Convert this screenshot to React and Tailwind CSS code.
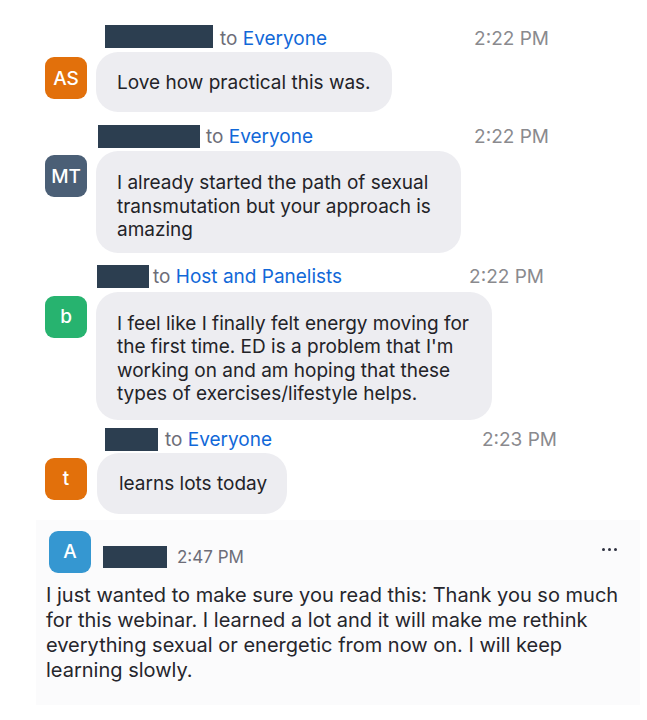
import React from "react";

const font = "font-['Inter','Liberation_Sans',sans-serif]";

function Header({ ml, w, barW, gap, to, time, shift = "mt-0" }) {
  return (
    <div className={`flex items-start h-[23px] ${ml} ${w}`}>
      <div className={`${barW} h-[23px] bg-[#2c3e50] shrink-0`} />
      <span className={`${gap} ${shift} text-[19px] leading-[23px] text-[#6d6d78] whitespace-nowrap`}>
        to <span className="text-[#1168d8]">{to}</span>
      </span>
      <span className={`ml-auto ${shift} text-[19px] leading-[23px] text-[#8a8a8e] whitespace-nowrap`}>{time}</span>
    </div>
  );
}

function Avatar({ bg, children, mt }) {
  return (
    <div
      className={`${mt} ml-[45px] w-[42px] h-[42px] rounded-[9px] ${bg} shrink-0 flex items-center justify-center text-white text-[19px] font-medium leading-none`}
    >
      {children}
    </div>
  );
}

export default function App() {
  return (
    <div className={`w-[647px] h-[720px] bg-white overflow-hidden ${font} text-[#232328] pt-[25px]`}>
      {/* Message 1 */}
      <Header ml="ml-[105px]" w="w-[444px]" barW="w-[108px]" gap="ml-[7px]" to="Everyone" time="2:22 PM" shift="mt-[2px]" />
      <div className="flex mt-[4px]">
        <Avatar bg="bg-[#e2700b]" mt="mt-[5px]">AS</Avatar>
        <div className="ml-[9px] bg-[#ededf1] rounded-[22px] pl-[21px] pr-[21px] pt-[19px] pb-[17px] text-[19px] leading-[24px] whitespace-nowrap">
          Love how practical this was.
        </div>
      </div>

      {/* Message 2 */}
      <div className="mt-[13px]">
        <Header ml="ml-[98px]" w="w-[451px]" barW="w-[102px]" gap="ml-[6px]" to="Everyone" time="2:22 PM" />
      </div>
      <div className="flex mt-[3px]">
        <Avatar bg="bg-[#4b5f76]" mt="mt-[4px]">MT</Avatar>
        <div className="ml-[9px] w-[365px] bg-[#ededf1] rounded-[22px] pl-[21px] pr-[10px] pt-[20px] pb-[11px] text-[19px] leading-[23.5px] whitespace-nowrap">
          I already started the path of sexual
          <br />
          transmutation but your approach is
          <br />
          amazing
        </div>
      </div>

      {/* Message 3 */}
      <div className="mt-[12px]">
        <Header ml="ml-[97px]" w="w-[447px]" barW="w-[52px]" gap="ml-[4px]" to="Host and Panelists" time="2:22 PM" />
      </div>
      <div className="flex mt-[4px]">
        <Avatar bg="bg-[#27b36f]" mt="mt-[4px]">b</Avatar>
        <div className="ml-[9px] w-[396px] bg-[#ededf1] rounded-[22px] pl-[21px] pr-[10px] pt-[20px] pb-[14px] text-[19px] leading-[23.5px] whitespace-nowrap">
          I feel like I finally felt energy moving for
          <br />
          the first time. ED is a problem that I'm
          <br />
          working on and am hoping that these
          <br />
          types of exercises/lifestyle helps.
        </div>
      </div>

      {/* Message 4 */}
      <div className="mt-[8px]">
        <Header ml="ml-[105px]" w="w-[452px]" barW="w-[53px]" gap="ml-[7px]" to="Everyone" time="2:23 PM" />
      </div>
      <div className="flex mt-[2px]">
        <Avatar bg="bg-[#e2700b]" mt="mt-[5px]">t</Avatar>
        <div className="ml-[10px] bg-[#ededf1] rounded-[22px] pl-[22px] pr-[20px] pt-[19px] pb-[18px] text-[19px] leading-[24px] whitespace-nowrap">
          learns lots today
        </div>
      </div>

      {/* Final panel */}
      <div className="mt-[6px] ml-[36px] w-[604px] bg-[#fbfbfc] pt-[11px] pb-[22px]">
        <div className="flex items-start pl-[13px] pr-[23px]">
          <div className="w-[42px] h-[42px] rounded-[9px] bg-[#3597d1] shrink-0 flex items-center justify-center text-white text-[19px] font-medium leading-none">
            A
          </div>
          <div className="ml-[12px] mt-[15px] w-[64px] h-[22px] bg-[#2c3e50] shrink-0" />
          <span className="ml-[10px] mt-[16px] text-[17px] leading-[20px] text-[#6d6d78] whitespace-nowrap">2:47 PM</span>
          <span className="ml-auto mt-[17px] flex gap-[3px] items-center">
            <span className="w-[3px] h-[3px] rounded-full bg-[#2e3140]" />
            <span className="w-[3px] h-[3px] rounded-full bg-[#2e3140]" />
            <span className="w-[3px] h-[3px] rounded-full bg-[#2e3140]" />
          </span>
        </div>
        <div className="mt-[10px] pl-[10px] text-[20px] leading-[25px] text-[#26262c] whitespace-nowrap">
          I just wanted to make sure you read this: Thank you so much
          <br />
          for this webinar. I learned a lot and it will make me rethink
          <br />
          everything sexual or energetic from now on. I will keep
          <br />
          learning slowly.
        </div>
      </div>
    </div>
  );
}
